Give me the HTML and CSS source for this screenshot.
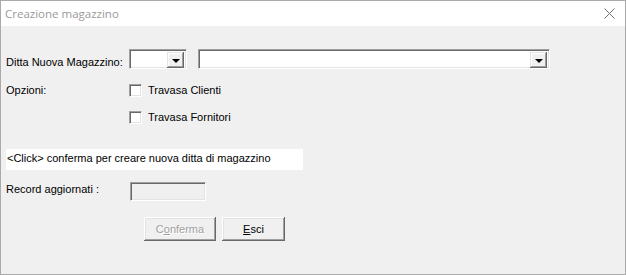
FILE: index.html
```html
<!DOCTYPE html>
<html>
<head>
    <title>Creazione magazzino</title>
    <link rel="stylesheet" href="styles.css">
</head>
<body>
    <div class="window">
        <div class="titlebar">
            <span class="title">Creazione magazzino</span>
            <svg class="close" width="11" height="11" viewBox="0 0 11 11">
                <path d="M0.5 0.5 L10.5 10.5 M10.5 0.5 L0.5 10.5" stroke="#6f6f6f" stroke-width="1" fill="none"/>
            </svg>
        </div>

        <div class="content">
            <div class="row row-ditta">
                <span class="label">Ditta Nuova Magazzino:</span>
                <div class="combo combo-small">
                    <span class="combo-arrow"></span>
                </div>
                <div class="combo combo-large">
                    <span class="combo-arrow"></span>
                </div>
            </div>

            <div class="row row-options">
                <span class="label">Opzioni:</span>
                <div class="checks">
                    <label class="check"><span class="checkbox"></span>Travasa Clienti</label>
                    <label class="check"><span class="checkbox"></span>Travasa Fornitori</label>
                </div>
            </div>

            <div class="info">&lt;Click&gt; conferma per creare nuova ditta di magazzino</div>

            <div class="row row-record">
                <span class="label label-record">Record aggiornati :</span>
                <div class="textbox"></div>
            </div>

            <div class="buttons">
                <button class="button button-confirm" disabled>C<u>o</u>nferma</button>
                <button class="button button-exit"><u>E</u>sci</button>
            </div>
        </div>
    </div>
</body>
</html>
```

FILE: styles.css
```css
* {
    box-sizing: border-box;
    margin: 0;
    padding: 0;
}

body {
    margin: 0;
    font-family: "Liberation Sans", Arial, sans-serif;
    font-size: 11px;
    line-height: 13px;
    color: #000000;
    background: #f0f0f0;
}

.window {
    width: 626px;
    height: 275px;
    border: 1px solid #aaaaaa;
    display: flex;
    flex-direction: column;
}

.titlebar {
    height: 25px;
    background: #ffffff;
    display: flex;
    align-items: center;
    justify-content: space-between;
    padding: 0 10px 0 4px;
    flex-shrink: 0;
}

.title {
    font-family: "Open Sans", "Noto Sans", sans-serif;
    font-size: 11.5px;
    color: #9a9a9a;
}

.close {
    display: block;
}

.content {
    flex-grow: 1;
    background: #f0f0f0;
    padding: 23px 0 0 5px;
    display: flex;
    flex-direction: column;
}

.row {
    display: flex;
}

.label {
    width: 123px;
    flex-shrink: 0;
}

.row-ditta .label {
    padding-top: 7px;
}

/* sunken 3D edge used by combos, checkboxes and textbox */
.combo,
.checkbox,
.textbox {
    border-top: 1px solid #a0a0a0;
    border-left: 1px solid #a0a0a0;
    border-right: 1px solid #ffffff;
    border-bottom: 1px solid #ffffff;
    box-shadow: inset 1px 1px 0 #696969, inset -1px -1px 0 #e3e3e3;
}

.combo {
    height: 20px;
    background: #ffffff;
    display: flex;
    justify-content: flex-end;
    padding: 2px;
}

.combo-small {
    width: 58px;
}

.combo-large {
    width: 352px;
    margin-left: 11px;
}

.combo-arrow {
    width: 17px;
    height: 16px;
    background: #f0f0f0;
    box-shadow: inset -1px -1px 0 #696969, inset 1px 1px 0 #e3e3e3, inset -2px -2px 0 #a0a0a0, inset 2px 2px 0 #ffffff;
    display: flex;
    align-items: center;
    justify-content: center;
}

.combo-arrow::after {
    content: "";
    border-left: 4px solid transparent;
    border-right: 4px solid transparent;
    border-top: 4px solid #000000;
    margin-top: 1px;
}

.row-options {
    margin-top: 8px;
}

.row-options .label {
    padding-top: 7px;
}

.checks {
    display: flex;
    flex-direction: column;
    gap: 14px;
    padding-top: 7px;
}

.check {
    display: flex;
    align-items: center;
    height: 13px;
}

.checkbox {
    width: 13px;
    height: 13px;
    background: #ffffff;
    margin-right: 6px;
}

.info {
    margin-top: 25px;
    width: 297px;
    height: 21px;
    background: #ffffff;
    padding: 3px 0 0 1px;
}

.row-record {
    margin-top: 12px;
}

.label-record {
    width: 124px;
    padding-top: 1px;
}

.textbox {
    width: 76px;
    height: 19px;
    background: #f0f0f0;
}

.buttons {
    display: flex;
    gap: 6px;
    margin-top: 16px;
    padding-left: 138px;
}

.button {
    height: 24px;
    font-family: "Liberation Sans", Arial, sans-serif;
    font-size: 11px;
    color: #000000;
    background: #f0f0f0;
    border: none;
    box-shadow: inset -1px -1px 0 #696969, inset 1px 1px 0 #ffffff, inset -2px -2px 0 #a0a0a0, inset 2px 2px 0 #e3e3e3;
}

.button-confirm {
    width: 72px;
    color: #a0a0a0;
    text-shadow: 1px 1px 0 #ffffff;
}

.button-exit {
    width: 63px;
}
```
